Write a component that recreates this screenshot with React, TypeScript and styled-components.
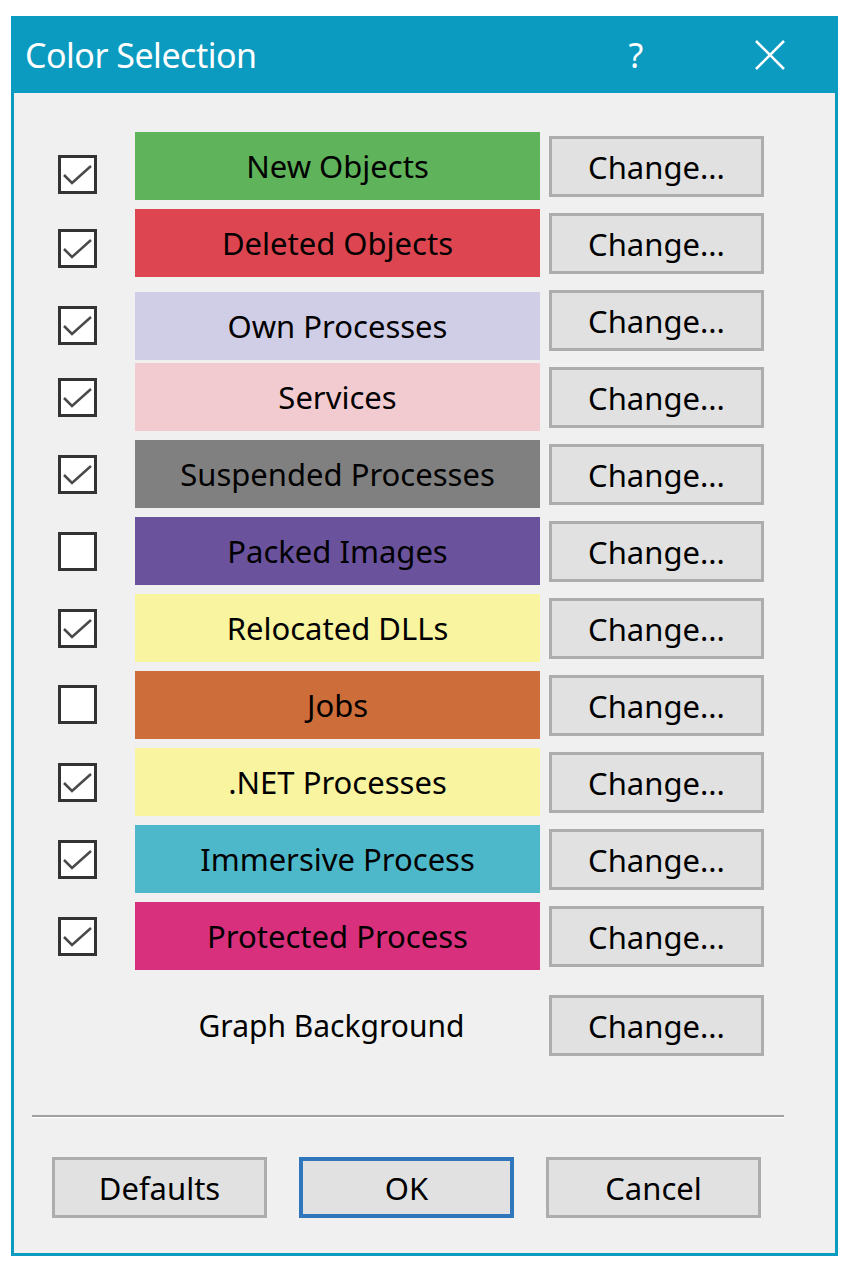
import styled, { createGlobalStyle } from 'styled-components';

const GlobalStyle = createGlobalStyle`
	body {
		margin: 0;
		background: #ffffff;
		font-family: 'Noto Sans', 'Liberation Sans', sans-serif;
	}
`;

const Dialog = styled.div`
	margin: 16px 0 0 11px;
	width: 827px;
	border: 3px solid #0b9ac0;
	border-top: none;
	background: #f0f0f0;
	box-sizing: border-box;
`;

const TitleBar = styled.div`
	display: flex;
	align-items: center;
	height: 77px;
	background: #0b9ac0;
	color: #ffffff;
	padding: 0 20px 0 11px;
`;
const Title = styled.h1`
	margin: 0;
	font-size: 34px;
	font-weight: 400;
	letter-spacing: -0.5px;
	flex: 1;
`;
const TitleButton = styled.div`
	width: 90px;
	height: 60px;
	display: flex;
	align-items: center;
	justify-content: center;
	font-size: 34px;
	& + & {
		margin-left: 44px;
	}
`;

const Body = styled.div`
	padding: 39px 0 35px 44px;
`;

const Row = styled.div`
	display: flex;
	align-items: flex-start;
	height: 77px;
`;

const Box = styled.div<{ $top: number }>`
	width: 39px;
	height: 39px;
	margin: ${(p) => p.$top}px 38px 0 0;
	box-sizing: border-box;
	border: 3px solid #333333;
	background: #ffffff;
	svg {
		display: block;
	}
`;

const Swatch = styled.div<{ $color: string; $drop: number }>`
	width: 405px;
	height: 68px;
	margin: ${(p) => p.$drop}px 9px 0 0;
	background: ${(p) => p.$color};
	display: flex;
	align-items: center;
	justify-content: center;
	font-size: 31px;
	color: #000000;
`;

const Button = styled.button<{ $primary?: boolean }>`
	width: 215px;
	height: 61px;
	box-sizing: border-box;
	background: #e1e1e1;
	border: ${(p) => (p.$primary ? '4px solid #2f76bd' : '3px solid #adadad')};
	font-family: 'Noto Sans', 'Liberation Sans', sans-serif;
	font-size: 31px;
	color: #000000;
	padding: 0;
	display: flex;
	align-items: center;
	justify-content: center;
`;

const ChangeButton = styled(Button)`
	margin-top: 4px;
`;

const GraphRow = styled.div`
	display: flex;
	align-items: center;
	margin-top: 16px;
	padding-left: 77px;
`;
const GraphLabel = styled.div`
	width: 405px;
	margin-right: 9px;
	text-align: center;
	font-size: 30px;
	color: #000000;
	padding-right: 12px;
	box-sizing: border-box;
`;

const Separator = styled.hr`
	margin: 59px 0 0 -26px;
	width: 752px;
	height: 0;
	border: none;
	border-top: 2px solid #a0a0a0;
	border-bottom: 1px solid #ffffff;
`;

const Footer = styled.div`
	display: flex;
	margin: 39px 0 0 -6px;
	gap: 32px;
`;

interface Entry {
	label: string;
	color: string;
	checked: boolean;
	box: number;
	drop?: number;
}

const entries: Entry[] = [
	{ label: 'New Objects', color: '#5fb35a', checked: true, box: 23 },
	{ label: 'Deleted Objects', color: '#dd4651', checked: true, box: 20 },
	{ label: 'Own Processes', color: '#d0cde6', checked: true, box: 20, drop: 6 },
	{ label: 'Services', color: '#f2cbd0', checked: true, box: 15 },
	{ label: 'Suspended Processes', color: '#808080', checked: true, box: 15 },
	{ label: 'Packed Images', color: '#6a529c', checked: false, box: 15 },
	{ label: 'Relocated DLLs', color: '#f8f4a0', checked: true, box: 15 },
	{ label: 'Jobs', color: '#cd6d39', checked: false, box: 14 },
	{ label: '.NET Processes', color: '#f8f4a0', checked: true, box: 15 },
	{ label: 'Immersive Process', color: '#4db8ca', checked: true, box: 15 },
	{ label: 'Protected Process', color: '#d9307e', checked: true, box: 15 },
];

function Check({ checked, top }: { checked: boolean; top: number }) {
	return (
		<Box $top={top}>
			{checked && (
				<svg width='33' height='33' viewBox='0 0 33 33'>
					<path d='M3 17 L11 25 L30 8' fill='none' stroke='#4a4a4a' strokeWidth='2.5' />
				</svg>
			)}
		</Box>
	);
}

function App() {
	return (
		<>
			<GlobalStyle />
			<Dialog>
				<TitleBar>
					<Title>Color Selection</Title>
					<TitleButton>?</TitleButton>
					<TitleButton>
						<svg width='32' height='32' viewBox='0 0 32 32'>
							<path d='M2 2 L30 30 M30 2 L2 30' stroke='#ffffff' strokeWidth='2.5' />
						</svg>
					</TitleButton>
				</TitleBar>
				<Body>
					{entries.map((e) => (
						<Row key={e.label}>
							<Check checked={e.checked} top={e.box} />
							<Swatch $color={e.color} $drop={e.drop ?? 0}>
								{e.label}
							</Swatch>
							<ChangeButton>Change...</ChangeButton>
						</Row>
					))}
					<GraphRow>
						<GraphLabel>Graph Background</GraphLabel>
						<Button>Change...</Button>
					</GraphRow>
					<Separator />
					<Footer>
						<Button>Defaults</Button>
						<Button $primary>OK</Button>
						<Button>Cancel</Button>
					</Footer>
				</Body>
			</Dialog>
		</>
	);
}

export default App;
